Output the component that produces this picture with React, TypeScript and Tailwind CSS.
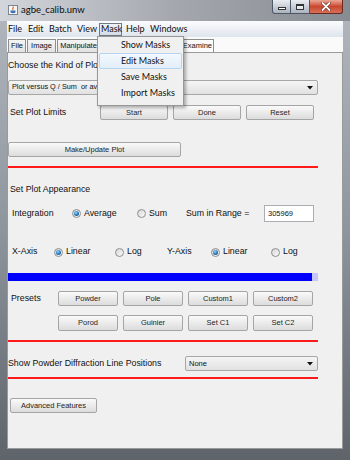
import React from "react";

const Btn = ({ children, className = "" }: { children: React.ReactNode; className?: string }) => (
  <div
    className={`flex items-center justify-center rounded-[2px] border border-[#a5a5a5] bg-gradient-to-b from-[#fafafa] to-[#dcdcdc] text-[7.5px] text-[#1e1e1e] ${className}`}
  >
    {children}
  </div>
);

const Arrow = () => (
  <svg width="6" height="4" viewBox="0 0 6 4">
    <path d="M0 0 L6 0 L3 3.5 Z" fill="#111" />
  </svg>
);

const Radio = ({ checked = false }: { checked?: boolean }) => (
  <span className="flex h-[9px] w-[9px] shrink-0 items-center justify-center rounded-full border border-[#8e8e8e] bg-gradient-to-br from-[#d6d6d6] to-[#fbfbfb]">
    {checked && (
      <span className="h-[5px] w-[5px] rounded-full bg-[radial-gradient(circle_at_40%_35%,#9ad6f7,#1f72b8_55%,#0c4683)]" />
    )}
  </span>
);

const RadioItem = ({ label, checked, className = "" }: { label: string; checked?: boolean; className?: string }) => (
  <div className={`flex items-center gap-[3px] ${className}`}>
    <Radio checked={checked} />
    <span>{label}</span>
  </div>
);

const RedLine = ({ className = "" }: { className?: string }) => (
  <div className={`h-[2px] w-[310px] bg-[#ff1a1a] ${className}`} />
);

export default function App() {
  return (
    <div className="relative flex h-[460px] w-[350px] flex-col overflow-hidden bg-gradient-to-b from-[#b3b8bf] via-[#8f959d] to-[#5f646b] font-['Liberation_Sans',Arial,sans-serif] text-[#111]">
      {/* Title bar */}
      <div className="flex h-[21px] shrink-0 items-start bg-gradient-to-r from-[#d3d7dc] via-[#a4a8ae] to-[#878c92]">
        <div className="ml-[8px] mt-[5px] flex h-[10px] w-[10px] items-center justify-center border border-[#7b8592] bg-[#f4f6f8]">
          <svg width="8" height="8" viewBox="0 0 8 8">
            <path d="M4 0.5 C5 2 3 2.5 4 4" stroke="#e2641c" strokeWidth="1.2" fill="none" />
            <path d="M1.5 4.5 H6.5 V6.5 Q4 8 1.5 6.5 Z" fill="#3b72b5" />
          </svg>
        </div>
        <span className="ml-[3px] mt-[4px] font-['Lato',sans-serif] text-[9.5px] leading-[12px] text-[#0b0b0b]">agbe_calib.unw</span>
        <div className="ml-auto mr-[7px] flex h-[15px]">
          <div className="flex h-[14px] w-[19px] items-center justify-center rounded-bl-[3px] border border-t-0 border-[#4e5866] bg-gradient-to-b from-[#e9edf2] to-[#aab3be]">
            <span className="mt-[4px] h-[3px] w-[8px] border border-[#333] bg-white" />
          </div>
          <div className="flex h-[14px] w-[19px] items-center justify-center border border-l-0 border-t-0 border-[#4e5866] bg-gradient-to-b from-[#e9edf2] to-[#aab3be]">
            <span className="h-[6px] w-[8px] border-[1.5px] border-t-[2px] border-[#333] bg-white/60" />
          </div>
          <div className="flex h-[14px] w-[33px] items-center justify-center rounded-br-[3px] border border-l-0 border-t-0 border-[#6b2a20] bg-gradient-to-b from-[#e9a796] via-[#c9462f] to-[#d67058]">
            <svg width="10" height="9" viewBox="0 0 10 9">
              <path d="M1.5 1 L8.5 8 M8.5 1 L1.5 8" stroke="#5a1a10" strokeWidth="3" strokeLinecap="round" />
              <path d="M1.5 1 L8.5 8 M8.5 1 L1.5 8" stroke="#ffffff" strokeWidth="1.8" strokeLinecap="round" />
            </svg>
          </div>
        </div>
      </div>

      {/* Client */}
      <div className="mx-[7px] flex flex-col bg-[#fafafa]">
        {/* Menu bar */}
        <div className="flex h-[16px] items-center bg-gradient-to-b from-[#fbfcfd] to-[#dfe5ee] font-['Lato',sans-serif] text-[9px] text-[#111]">
          <span className="ml-[1px] w-[20px]">File</span>
          <span className="w-[21px]">Edit</span>
          <span className="w-[28px]">Batch</span>
          <span className="w-[22px]">View</span>
          <span className="flex h-[13px] w-[23px] items-center border border-[#6f7a88] bg-gradient-to-b from-[#eef2f6] to-[#d4dce6] pl-[1px]">Mask</span>
          <span className="w-[28px] pl-[4px]">Help</span>
          <span>Windows</span>
        </div>
        {/* Tabs */}
        <div className="flex h-[15px] items-end bg-[#fafafa] pl-[1px] text-[7.5px]">
          <div className="flex h-[13px] w-[18px] items-center justify-center border border-b-0 border-[#8e8e8e] bg-gradient-to-b from-[#f4f4f4] to-[#e2e2e2]">File</div>
          <div className="ml-[1px] flex h-[13px] w-[29px] items-center justify-center border border-b-0 border-[#8e8e8e] bg-gradient-to-b from-[#f4f4f4] to-[#e2e2e2]">Image</div>
          <div className="ml-[1px] flex h-[13px] w-[43px] items-center justify-center border border-b-0 border-[#8e8e8e] bg-gradient-to-b from-[#f4f4f4] to-[#e2e2e2]">Manipulate</div>
          <div className="h-[13px] w-[44px] border border-b-0 border-[#8e8e8e] bg-gradient-to-b from-[#f4f4f4] to-[#e2e2e2]" />
          <div className="h-[13px] w-[38px] border border-b-0 border-[#8e8e8e] bg-gradient-to-b from-[#f4f4f4] to-[#e2e2e2]" />
          <div className="flex h-[13px] w-[32px] items-center justify-end border border-b-0 border-[#8e8e8e] bg-[#fbfbfb] pr-[1px]">Examine</div>
        </div>
        {/* Panel */}
        <div className="flex h-[397px] flex-col border border-[#9a9a9a] bg-[#f0f0f0] text-[8.8px]">
          <div className="mt-[7px] flex h-[12px] items-center">Choose the Kind of Plot to Generate</div>
          <div className="mt-[8px] flex h-[15px] w-[310px] items-center justify-between rounded-[2px] border border-[#a7a7a7] bg-gradient-to-b from-[#f5f5f5] to-[#e1e1e1] pl-[3px] pr-[4px]">
            <span className="whitespace-pre text-[7.3px]">Plot versus Q / Sum  or average intensity</span>
            <Arrow />
          </div>
          <div className="mt-[10px] flex h-[15px] items-center">
            <span className="w-[92px] pl-[2px]">Set Plot Limits</span>
            <Btn className="h-[15px] w-[68px]">Start</Btn>
            <Btn className="ml-[5px] h-[15px] w-[68px]">Done</Btn>
            <Btn className="ml-[5px] h-[15px] w-[68px]">Reset</Btn>
          </div>
          <Btn className="mt-[22px] h-[15px] w-[173px]">Make/Update Plot</Btn>
          <RedLine className="mt-[9px]" />
          <div className="mt-[16px] flex h-[12px] items-center pl-[2px]">Set Plot Appearance</div>
          <div className="mt-[9px] flex h-[17px] items-center pl-[4px]">
            <span className="w-[60px]">Integration</span>
            <RadioItem className="w-[65px]" label="Average" checked />
            <RadioItem className="w-[49px]" label="Sum" />
            <span className="w-[78px]">Sum in Range =</span>
            <div className="flex h-[17px] w-[50px] items-center border border-[#abadb3] bg-white pl-[3px] text-[7.5px]">305969</div>
          </div>
          <div className="mt-[22px] flex h-[16px] items-center pl-[4px]">
            <span className="w-[42px]">X-Axis</span>
            <RadioItem className="w-[61px]" label="Linear" checked />
            <RadioItem className="w-[52px]" label="Log" />
            <span className="w-[44px]">Y-Axis</span>
            <RadioItem className="w-[60px]" label="Linear" checked />
            <RadioItem label="Log" />
          </div>
          <div className="mt-[13px] flex h-[8px] w-[310px] bg-[#c6c6fb]">
            <div className="h-full w-[304px] bg-[#0000ff]" />
          </div>
          <div className="mt-[10px] flex h-[15px] items-center">
            <span className="w-[50px] pl-[3px]">Presets</span>
            <div className="flex gap-[5px]">
              <Btn className="h-[15px] w-[60px]">Powder</Btn>
              <Btn className="h-[15px] w-[60px]">Pole</Btn>
              <Btn className="h-[15px] w-[60px]">Custom1</Btn>
              <Btn className="h-[15px] w-[60px]">Custom2</Btn>
            </div>
          </div>
          <div className="mt-[9px] flex h-[16px] gap-[5px] pl-[50px]">
            <Btn className="h-[16px] w-[60px]">Porod</Btn>
            <Btn className="h-[16px] w-[60px]">Guinier</Btn>
            <Btn className="h-[16px] w-[60px]">Set C1</Btn>
            <Btn className="h-[16px] w-[60px]">Set C2</Btn>
          </div>
          <RedLine className="mt-[9px]" />
          <div className="mt-[14px] flex h-[15px] items-center">
            <span className="w-[177px]">Show Powder Diffraction Line Positions</span>
            <div className="flex h-[15px] w-[133px] items-center justify-between rounded-[2px] border border-[#a7a7a7] bg-gradient-to-b from-[#f5f5f5] to-[#e1e1e1] pl-[3px] pr-[4px]">
              <span className="text-[7.5px]">None</span>
              <Arrow />
            </div>
          </div>
          <RedLine className="mt-[6px]" />
          <Btn className="ml-[2px] mt-[19px] h-[15px] w-[87px]">Advanced Features</Btn>
        </div>
      </div>

      {/* Dropdown menu */}
      <div className="absolute left-[97px] top-[36px] flex h-[70px] w-[87px] flex-col border border-[#979797] bg-[#f0f0f0] py-0 font-['Lato',sans-serif] text-[9px] text-[#111] shadow-[2px_2px_3px_rgba(0,0,0,0.3)]">
        <div className="flex h-[16px] items-center pl-[23px]">Show Masks</div>
        <div className="mx-[1px] flex h-[16px] items-center rounded-[2px] border border-[#b4d6f2] bg-gradient-to-b from-[#f2f8fd] to-[#e3eef9] pl-[21px]">Edit Masks</div>
        <div className="flex h-[16px] items-center pl-[23px]">Save Masks</div>
        <div className="flex h-[16px] items-center pl-[23px]">Import Masks</div>
      </div>
    </div>
  );
}
